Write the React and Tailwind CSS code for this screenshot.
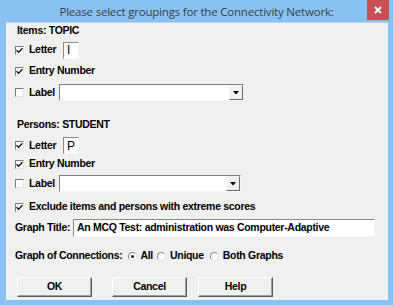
import React from "react";

const Check = ({ checked }) => (
    <span className="w-[9px] h-[9px] shrink-0 bg-white border border-t-[#7a7a7a] border-l-[#7a7a7a] border-b-[#e3e3e3] border-r-[#e3e3e3] flex items-center justify-center">
        {checked && (
            <svg width="7" height="7" viewBox="0 0 7 7">
                <path d="M0.5 3.2 L2.6 5.3 L6.5 1.2" stroke="#1a1a1a" strokeWidth="1.5" fill="none" />
            </svg>
        )}
    </span>
);

const Radio = ({ on }) => (
    <span className="w-[9px] h-[9px] shrink-0 rounded-full bg-white border border-t-[#8a8a8a] border-l-[#8a8a8a] border-b-[#e0e0e0] border-r-[#e0e0e0] flex items-center justify-center">
        {on && <span className="w-[3px] h-[3px] rounded-full bg-[#1a1a1a]"></span>}
    </span>
);

const LetterBox = ({ value }) => (
    <div className="w-[16px] h-[17px] bg-white border border-t-[#8a8a8a] border-l-[#8a8a8a] border-b-[#f5f5f5] border-r-[#f5f5f5] flex items-center pl-[3px] text-[12px] font-normal text-black">
        {value}
    </div>
);

const Combo = ({ width }) => (
    <div className={`h-[17px] ${width} bg-white border border-t-[#808080] border-l-[#808080] border-b-[#f5f5f5] border-r-[#f5f5f5] flex justify-end`}>
        <div className="w-[14px] h-full bg-[#f0f0f0] border border-t-[#f5f5f5] border-l-[#f5f5f5] border-b-[#696969] border-r-[#696969] flex items-center justify-center">
            <svg width="6" height="4" viewBox="0 0 6 4">
                <path d="M0 0 H6 L3 3.5 Z" fill="#000" />
            </svg>
        </div>
    </div>
);

const Button = ({ label, className }) => (
    <button className={`w-[75px] h-[20px] bg-[#f0f0f0] border border-t-white border-l-white border-b-[#5a5a5a] border-r-[#5a5a5a] shadow-[inset_-1px_-1px_0_#a0a0a0] text-[10.5px] font-bold text-black ${className}`}>
        {label}
    </button>
);

export default function App() {
    return (
        <div className="w-[393px] h-[305px] bg-[#88c2f2] flex flex-col font-['Liberation_Sans',Arial,sans-serif] overflow-hidden">
            {/* title bar */}
            <div className="relative h-[22px] flex items-center justify-center pt-[1px]">
                <span className="font-['Open_Sans',sans-serif] text-[11.5px] text-[#3a3f45] tracking-[-0.2px]">
                    Please select groupings for the Connectivity Network:
                </span>
                <div className="absolute right-[4px] top-0 w-[22px] h-[20px] bg-[#c75050] flex items-center justify-center">
                    <svg width="8" height="8" viewBox="0 0 8 8">
                        <path d="M1 1 L7 7 M7 1 L1 7" stroke="#fff" strokeWidth="1.8" />
                    </svg>
                </div>
            </div>

            {/* content */}
            <div className="flex-1 ml-[6px] mr-[5px] mb-[5px] bg-[#f0f0f0] border-t border-[#b9d4ec] pl-[9px] flex flex-col text-[10.5px] font-bold text-black tracking-[-0.3px]">
                <div className="mt-[1px] h-[14px] flex items-center pl-[2px]">Items: TOPIC</div>

                <div className="mt-[3px] h-[18px] flex items-center">
                    <Check checked />
                    <span className="ml-[5px] w-[34px]">Letter</span>
                    <LetterBox value="I" />
                </div>

                <div className="mt-[5px] h-[14px] flex items-center">
                    <Check checked />
                    <span className="ml-[5px]">Entry Number</span>
                </div>

                <div className="mt-[6px] h-[17px] flex items-center">
                    <Check />
                    <span className="ml-[5px] w-[30px]">Label</span>
                    <Combo width="w-[185px]" />
                </div>

                <div className="mt-[17px] h-[14px] flex items-center pl-[2px]">Persons: STUDENT</div>

                <div className="mt-[5px] h-[17px] flex items-center">
                    <Check checked />
                    <span className="ml-[5px] w-[34px]">Letter</span>
                    <LetterBox value="P" />
                </div>

                <div className="mt-[3px] h-[14px] flex items-center">
                    <Check checked />
                    <span className="ml-[5px]">Entry Number</span>
                </div>

                <div className="mt-[4px] h-[17px] flex items-center">
                    <Check />
                    <span className="ml-[5px] w-[30px]">Label</span>
                    <Combo width="w-[182px]" />
                </div>

                <div className="mt-[8px] h-[14px] flex items-center">
                    <Check checked />
                    <span className="ml-[5px]">Exclude items and persons with extreme scores</span>
                </div>

                <div className="mt-[5px] h-[18px] flex items-center">
                    <span className="w-[58px]">Graph Title:</span>
                    <div className="w-[302px] h-[18px] bg-white border border-t-[#8a8a8a] border-l-[#8a8a8a] border-b-[#f5f5f5] border-r-[#f5f5f5] flex items-center pl-[3px]">
                        An MCQ Test: administration was Computer-Adaptive
                    </div>
                </div>

                <div className="mt-[12px] h-[14px] flex items-center">
                    <span>Graph of Connections:</span>
                    <span className="ml-[6px]"><Radio on /></span>
                    <span className="ml-[3px]">All</span>
                    <span className="ml-[4px]"><Radio /></span>
                    <span className="ml-[4px]">Unique</span>
                    <span className="ml-[6px]"><Radio /></span>
                    <span className="ml-[4px]">Both Graphs</span>
                </div>

                <div className="mt-[14px] flex items-center">
                    <Button label="OK" className="ml-[2px]" />
                    <Button label="Cancel" className="ml-[20px]" />
                    <Button label="Help" className="ml-[11px]" />
                </div>
            </div>
        </div>
    );
}
